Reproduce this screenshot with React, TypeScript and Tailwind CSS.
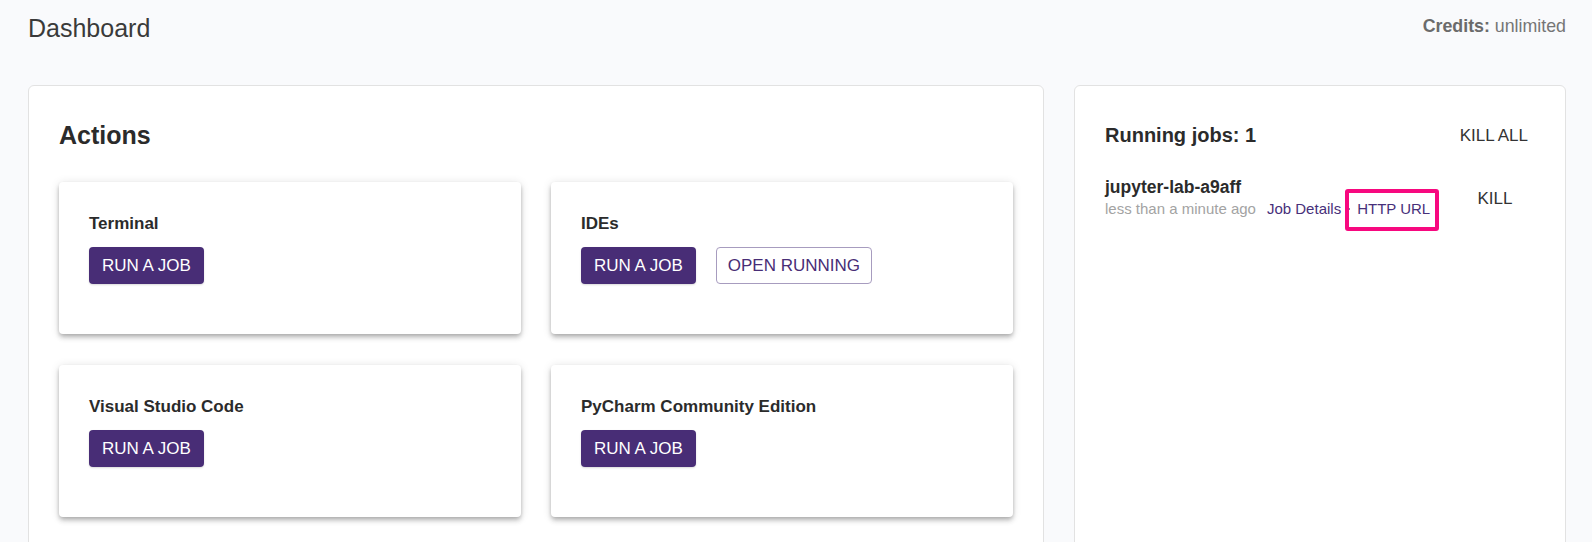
import React from "react";

function PrimaryButton({ children }: { children: React.ReactNode }) {
  return (
    <button className="h-[37px] px-[13px] rounded-[4px] bg-[#482d76] text-white text-[17px] leading-none uppercase shadow-[0_1px_2px_rgba(0,0,0,0.15)]">
      {children}
    </button>
  );
}

function OutlinedButton({ children }: { children: React.ReactNode }) {
  return (
    <button className="h-[37px] px-[11px] rounded-[4px] border border-[#a79cbf] bg-white text-[#482d76] text-[17px] leading-none uppercase">
      {children}
    </button>
  );
}

function ActionCard({ title, children }: { title: string; children: React.ReactNode }) {
  return (
    <div className="h-[152px] rounded-[4px] bg-white px-[30px] pt-[32px] shadow-[0px_2px_4px_-1px_rgba(0,0,0,0.2),0px_4px_5px_0px_rgba(0,0,0,0.14),0px_1px_10px_0px_rgba(0,0,0,0.12)]">
      <div className="text-[17px] font-bold leading-[19px] text-[#2b2b2b] mb-[14px]">{title}</div>
      <div className="flex gap-[20px]">{children}</div>
    </div>
  );
}

export default function App() {
  return (
    <div className="min-h-screen bg-[#f9fafc] font-['Liberation_Sans',Arial,sans-serif] overflow-hidden">
      <header className="flex justify-between items-start h-[85px] pl-[28px] pr-[26px]">
        <div className="pt-[14px] text-[25px] leading-[28px] text-[#3a3a3a]">Dashboard</div>
        <div className="pt-[16px] text-[17.8px] leading-[20px] text-[#757575]">
          <span className="font-bold text-[#6b6b6b]">Credits:</span> unlimited
        </div>
      </header>

      <main className="grid grid-cols-[1016px_492px] gap-[30px] px-[28px]">
        <section className="bg-white border border-[#e2e2e2] rounded-[6px] pt-[35px] px-[30px] pb-[30px]">
          <h1 className="text-[25px] font-bold leading-[28px] text-[#2b2b2b] mb-[33px]">Actions</h1>
          <div className="grid grid-cols-2 gap-x-[30px] gap-y-[31px]">
            <ActionCard title="Terminal">
              <PrimaryButton>Run a job</PrimaryButton>
            </ActionCard>
            <ActionCard title="IDEs">
              <PrimaryButton>Run a job</PrimaryButton>
              <OutlinedButton>Open running</OutlinedButton>
            </ActionCard>
            <ActionCard title="Visual Studio Code">
              <PrimaryButton>Run a job</PrimaryButton>
            </ActionCard>
            <ActionCard title="PyCharm Community Edition">
              <PrimaryButton>Run a job</PrimaryButton>
            </ActionCard>
          </div>
        </section>

        <section className="bg-white border border-[#e2e2e2] rounded-[6px] pt-[30px] px-[30px]">
          <div className="flex justify-between items-center h-[38px]">
            <h2 className="text-[20px] font-bold leading-[24px] text-[#2b2b2b]">Running jobs: 1</h2>
            <button className="h-[37px] px-[7px] text-[17px] leading-none text-[#333] uppercase">Kill all</button>
          </div>

          <div className="mt-[23px] flex items-center justify-between">
            <div>
              <div className="text-[17.5px] font-bold leading-[20px] text-[#2b2b2b]">jupyter-lab-a9aff</div>
              <div className="mt-[2px] flex items-center text-[15px] leading-[20px]">
                <span className="text-[#a3a3a3]">less than a minute ago</span>
                <a className="ml-[11px] text-[#47307a]">Job Details</a>
                <span className="ml-[7px] w-[2px] h-[2px] rounded-full bg-[#6b5b8a]" />
                <span className="relative ml-[7px] text-[#47307a]">
                  HTTP URL
                  <span className="absolute -top-[10px] -bottom-[12px] -left-[12px] -right-[9px] border-[4px] border-[#f7087f] rounded-[3px]" />
                </span>
              </div>
            </div>
            <button className="h-[37px] w-[80px] flex items-center justify-center text-[17px] leading-none text-[#333] uppercase">
              Kill
            </button>
          </div>
        </section>
      </main>
    </div>
  );
}
